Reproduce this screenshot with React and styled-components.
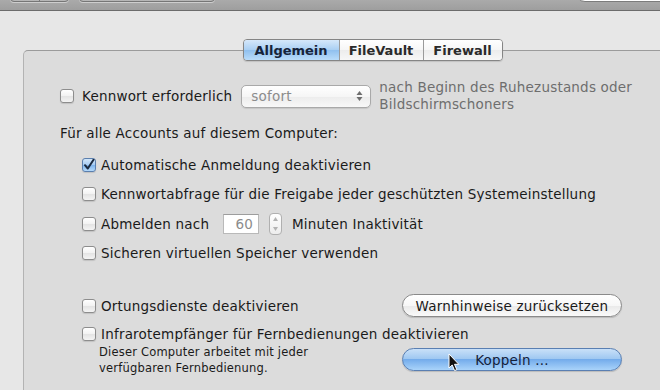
import React from 'react';
import styled, { createGlobalStyle, css } from 'styled-components';

const Global = createGlobalStyle`
  *, *::before, *::after { box-sizing: border-box; }
  html, body { margin: 0; padding: 0; }
  body {
    background: #e7e7e7;
    font-family: "DejaVu Sans", "Liberation Sans", sans-serif;
    font-size: 13.5px;
    letter-spacing: 0.2px;
    color: #1a1a1a;
    overflow: hidden;
  }
`;

const Window = styled.div`
  width: 660px;
  height: 390px;
  overflow: hidden;
  display: flex;
  flex-direction: column;
  background: #e7e7e7;
`;

const Toolbar = styled.div`
  flex: none;
  height: 11px;
  overflow: hidden;
  display: flex;
  align-items: flex-end;
  gap: 10px;
  padding: 0 0 8px 10px;
  background: linear-gradient(#aaaaaa, #9e9e9e);
  border-bottom: 1px solid #6c6c6c;
`;

const ToolGroup = styled.div`
  display: flex;
  height: 20px;
  border: 1px solid #767676;
  border-radius: 4px;
  background: linear-gradient(#c9c9c9, #b6b6b6);
  box-shadow: 0 1px 0 rgba(255, 255, 255, 0.45);
  overflow: hidden;
`;

const ToolSeg = styled.div`
  width: ${(p) => p.$w}px;
  height: 100%;
  & + & { border-left: 1px solid #7a7a7a; }
`;

const Spacer = styled.div`
  flex: 1;
`;

const SearchField = styled.div`
  width: 100px;
  height: 20px;
  margin-right: -15px;
  border: 1px solid #7c7c7c;
  border-radius: 10px;
  background: #ffffff;
`;

const Stage = styled.div`
  flex: 1;
  display: flex;
  flex-direction: column;
  margin-left: 23px;
  margin-right: -62px;
`;

const TabBar = styled.div`
  position: relative;
  z-index: 1;
  margin-top: 28px;
  display: flex;
  justify-content: center;
`;

const TabGroup = styled.div`
  display: flex;
  height: 22px;
  border: 1px solid #858585;
  border-radius: 4px;
  overflow: hidden;
  box-shadow: 0 1px 1px rgba(0, 0, 0, 0.12);
`;

const Tab = styled.div`
  width: ${(p) => p.$w}px;
  display: flex;
  align-items: center;
  justify-content: center;
  font-size: 13px;
  font-weight: bold;
  letter-spacing: 0;
  color: #2a2a2a;
  background: linear-gradient(#ffffff, #f6f6f6 50%, #ececec 50%, #f7f7f7);
  & + & { border-left: 1px solid #9a9a9a; }
  ${(p) =>
    p.$active &&
    css`
      color: #16233a;
      background: linear-gradient(#d6e8fa, #a9cff3 50%, #8fbfee 50%, #b9dcfa);
    `}
`;

const Panel = styled.div`
  flex: 1;
  margin-top: -11px;
  border-top: 1px solid #9b9b9b;
  border-left: 1px solid #b3b3b3;
  border-radius: 5px 0 0 0;
  background: #dcdcdc;
  padding: 28px 0 0 36px;
  display: flex;
  flex-direction: column;
`;

const Row = styled.div`
  display: flex;
  align-items: center;
  flex: none;
  height: ${(p) => p.$h}px;
  margin-top: ${(p) => p.$mt || 0}px;
  padding-left: ${(p) => p.$indent || 0}px;
`;

const BoxWrap = styled.label`
  display: flex;
  align-items: center;
  gap: ${(p) => p.$gap}px;
  white-space: nowrap;
`;

const Box = styled.span`
  flex: none;
  width: 14px;
  height: 14px;
  border: 1px solid #8d8d8d;
  border-radius: 3px;
  background: linear-gradient(#ffffff, #f2f2f2 50%, #e3e3e3 50%, #f4f4f4);
  box-shadow: 0 1px 1px rgba(0, 0, 0, 0.12);
  display: flex;
  align-items: center;
  justify-content: center;
  ${(p) =>
    p.$checked &&
    css`
      border-color: #5b7fae;
      background: linear-gradient(#d2e6fa, #a6cbf2 50%, #7db3ec 50%, #b4d9fa);
    `}
`;

const Label = styled.span`
  width: ${(p) => (p.$w ? `${p.$w}px` : 'auto')};
`;

const Popup = styled.div`
  flex: none;
  width: 130px;
  height: 23px;
  margin-left: 9px;
  border: 1px solid #a9a9a9;
  border-radius: 5px;
  background: linear-gradient(#ffffff, #f6f6f6 50%, #ececec 50%, #f8f8f8);
  box-shadow: 0 1px 1px rgba(0, 0, 0, 0.1);
  display: flex;
  align-items: center;
  justify-content: space-between;
  padding: 0 7px 0 9px;
  color: #8c8c8c;
`;

const Hint = styled.div`
  margin-left: 8px;
  color: #6e6e6e;
  line-height: 17px;
`;

const Heading = styled.div`
  margin-top: 12px;
  line-height: 17px;
`;

const Group = styled.div`
  display: flex;
  flex-direction: column;
  margin-top: 8px;
`;

const NumberField = styled.div`
  flex: none;
  width: 36px;
  height: 20px;
  background: #ffffff;
  border: 1px solid #b9b9b9;
  border-top-color: #9d9d9d;
  display: flex;
  align-items: center;
  justify-content: flex-end;
  padding-right: 5px;
  color: #8c8c8c;
`;

const Stepper = styled.div`
  flex: none;
  width: 13px;
  height: 22px;
  margin: 0 10px 0 10px;
  border: 1px solid #b0b0b0;
  border-radius: 4px;
  background: linear-gradient(#ffffff, #ededed);
  display: flex;
  flex-direction: column;
  align-items: center;
  justify-content: space-around;
`;

const Split = styled.div`
  display: flex;
  align-items: center;
  width: ${(p) => p.$w}px;
  flex: none;
`;

const PillButton = styled.div`
  position: relative;
  flex: none;
  width: 220px;
  height: 23px;
  border-radius: 12px;
  border: 1px solid #8a8a8a;
  display: flex;
  align-items: center;
  justify-content: center;
  box-shadow: 0 1px 1px rgba(0, 0, 0, 0.15);
  background: linear-gradient(#ffffff, #f7f7f7 50%, #e9e9e9 50%, #fafafa);
  ${(p) =>
    p.$primary &&
    css`
      border-color: #5a7fb2;
      color: #14213a;
      background: linear-gradient(#c9e0f8, #9cc6f1 50%, #74aceb 50%, #a9d3fa);
    `}
`;

const SmallText = styled.div`
  font-size: 11.5px;
  line-height: 16px;
  padding-left: 17px;
`;

const Cursor = styled.svg`
  position: absolute;
  left: 45px;
  top: 4px;
`;

const Check = () => (
  <svg width="12" height="12" viewBox="0 0 12 12">
    <path d="M2 6.2 L4.8 9.5 L10.5 0.8" fill="none" stroke="#1b2a3f" strokeWidth="2" strokeLinecap="round" strokeLinejoin="round" />
  </svg>
);

const Checkbox = ({ checked, children, gap = 5, w }) => (
  <BoxWrap $gap={gap}>
    <Box $checked={checked}>{checked && <Check />}</Box>
    <Label $w={w}>{children}</Label>
  </BoxWrap>
);

const UpDown = () => (
  <svg width="7" height="12" viewBox="0 0 7 12">
    <path d="M3.5 1 L6.5 5 L0.5 5 Z" fill="#6e6e6e" />
    <path d="M3.5 11 L6.5 7 L0.5 7 Z" fill="#6e6e6e" />
  </svg>
);

const Tri = ({ up }) => (
  <svg width="5" height="4" viewBox="0 0 5 4">
    <path d={up ? 'M2.5 0 L5 4 L0 4 Z' : 'M2.5 4 L5 0 L0 0 Z'} fill="#b3b3b3" />
  </svg>
);

export default function App() {
  return (
    <Window>
      <Global />
      <Toolbar>
        <ToolGroup>
          <ToolSeg $w={28} />
          <ToolSeg $w={29} />
        </ToolGroup>
        <ToolGroup>
          <ToolSeg $w={134} />
        </ToolGroup>
        <Spacer />
        <SearchField />
      </Toolbar>
      <Stage>
        <TabBar>
          <TabGroup>
            <Tab $w={95} $active>Allgemein</Tab>
            <Tab $w={84}>FileVault</Tab>
            <Tab $w={79}>Firewall</Tab>
          </TabGroup>
        </TabBar>
        <Panel>
          <Row $h={34}>
            <Checkbox gap={8}>Kennwort erforderlich</Checkbox>
            <Popup>
              <span>sofort</span>
              <UpDown />
            </Popup>
            <Hint>
              nach Beginn des Ruhezustands oder
              <br />
              Bildschirmschoners
            </Hint>
          </Row>
          <Heading>Für alle Accounts auf diesem Computer:</Heading>
          <Group>
            <Row $h={29.5} $indent={22}>
              <Checkbox checked>Automatische Anmeldung deaktivieren</Checkbox>
            </Row>
            <Row $h={29.5} $indent={22}>
              <Checkbox>Kennwortabfrage für die Freigabe jeder geschützten Systemeinstellung</Checkbox>
            </Row>
            <Row $h={29.5} $indent={22}>
              <Checkbox w={122}>Abmelden nach</Checkbox>
              <NumberField>60</NumberField>
              <Stepper>
                <Tri up />
                <Tri />
              </Stepper>
              <Label>Minuten Inaktivität</Label>
            </Row>
            <Row $h={29.5} $indent={22}>
              <Checkbox>Sicheren virtuellen Speicher verwenden</Checkbox>
            </Row>
          </Group>
          <Row $h={29} $mt={23} $indent={22}>
            <Split $w={320}>
              <Checkbox>Ortungsdienste deaktivieren</Checkbox>
            </Split>
            <PillButton>Warnhinweise zurücksetzen</PillButton>
          </Row>
          <Row $h={20} $mt={3.5} $indent={22}>
            <Checkbox>Infrarotempfänger für Fernbedienungen deaktivieren</Checkbox>
          </Row>
          <Row $h={32} $indent={22}>
            <Split $w={320}>
              <SmallText>
                Dieser Computer arbeitet mit jeder
                <br />
                verfügbaren Fernbedienung.
              </SmallText>
            </Split>
            <PillButton $primary>
              Koppeln ...
              <Cursor width="12" height="19" viewBox="0 0 12 19">
                <path d="M1 1 L1 15 L4.2 12 L6.6 17.6 L8.8 16.7 L6.5 11.3 L10.8 11.3 Z" fill="#111" stroke="#fff" strokeWidth="1" strokeLinejoin="round" />
              </Cursor>
            </PillButton>
          </Row>
        </Panel>
      </Stage>
    </Window>
  );
}
